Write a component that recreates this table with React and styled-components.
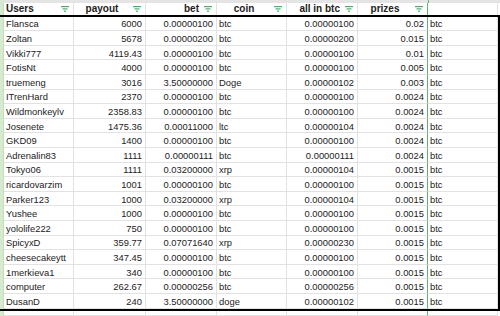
import styled, { createGlobalStyle } from "styled-components";

const GlobalStyle = createGlobalStyle`
  html, body {
    margin: 0;
    padding: 0;
    background: #ffffff;
    overflow: hidden;
  }
  * { box-sizing: border-box; }
`;

const COLS = "4px 70px 72px 71px 70px 71px 70px 70px";

const rows = [
  ["Flansca", "6000", "0.00000100", "btc", "0.00000100", "0.02"],
  ["Zoltan", "5678", "0.00000200", "btc", "0.00000200", "0.015"],
  ["Vikki777", "4119.43", "0.00000100", "btc", "0.00000100", "0.01"],
  ["FotisNt", "4000", "0.00000100", "btc", "0.00000100", "0.005"],
  ["truemeng", "3016", "3.50000000", "Doge", "0.00000102", "0.003"],
  ["ITrenHard", "2370", "0.00000100", "btc", "0.00000100", "0.0024"],
  ["Wildmonkeylv", "2358.83", "0.00000100", "btc", "0.00000100", "0.0024"],
  ["Josenete", "1475.36", "0.00011000", "ltc", "0.00000104", "0.0024"],
  ["GKD09", "1400", "0.00000100", "btc", "0.00000100", "0.0024"],
  ["Adrenalin83", "1111", "0.00000111", "btc", "0.00000111", "0.0024"],
  ["Tokyo06", "1111", "0.03200000", "xrp", "0.00000104", "0.0015"],
  ["ricardovarzim", "1001", "0.00000100", "btc", "0.00000100", "0.0015"],
  ["Parker123", "1000", "0.03200000", "xrp", "0.00000104", "0.0015"],
  ["Yushee", "1000", "0.00000100", "btc", "0.00000100", "0.0015"],
  ["yololife222", "750", "0.00000100", "btc", "0.00000100", "0.0015"],
  ["SpicyxD", "359.77", "0.07071640", "xrp", "0.00000230", "0.0015"],
  ["cheesecakeytt", "347.45", "0.00000100", "btc", "0.00000100", "0.0015"],
  ["1merkieva1", "340", "0.00000100", "btc", "0.00000100", "0.0015"],
  ["computer", "262.67", "0.00000256", "btc", "0.00000256", "0.0015"],
  ["DusanD", "240", "3.50000000", "doge", "0.00000102", "0.0015"],
];

const Sheet = styled.div`
  width: 500px;
  height: 316px;
  background: #ffffff;
  font-family: "Liberation Sans", Arial, sans-serif;
  color: #222222;
  display: flex;
  flex-direction: column;
  overflow: hidden;
`;

const TopBand = styled.div`
  height: 3px;
  background: #e4e4e4;
  display: grid;
  grid-template-columns: 4px 424px 1px 71px;
`;

const BandCell = styled.div`
  background: ${(p) => p.bg || "transparent"};
`;

const HeaderRow = styled.div`
  display: grid;
  grid-template-columns: ${COLS} 2px;
  height: 13px;
`;

const Body = styled.div`
  width: 500px;
  border-top: 2px solid #000000;
  border-bottom: 2px solid #000000;
`;

const Row = styled.div`
  display: grid;
  grid-template-columns: ${COLS} 2px;
  height: ${(p) => p.h || 14.6}px;
`;

const Gutter = styled.div`
  background: #d6ead0;
  border-right: 1px solid #c5dcc0;
`;

const Cell = styled.div`
  display: flex;
  align-items: center;
  justify-content: ${(p) =>
    p.align === "right" ? "flex-end" : p.align === "center" ? "center" : "flex-start"};
  padding: 1px 3px 0 2px;
  font-size: 9.4px;
  white-space: nowrap;
  overflow: hidden;
  border-right: 1px solid ${(p) => (p.green ? "#5fb36a" : "#e2e2e2")};
  border-bottom: 1px solid #e2e2e2;
`;

const HeadCell = styled.div`
  display: flex;
  align-items: center;
  gap: 5px;
  padding: 0 4px 0 2px;
  font-size: 10px;
  font-weight: bold;
  white-space: nowrap;
  border-right: 1px solid ${(p) => (p.green ? "#5fb36a" : "#e2e2e2")};
`;

const HeadLabel = styled.span`
  flex: 1;
  text-align: ${(p) => p.align || "left"};
`;

const RightEdge = styled.div`
  background: #000000;
`;

const Filter = () => (
  <svg width="8" height="6" viewBox="0 0 8 6">
    <rect x="0" y="0" width="8" height="1.2" fill="#4caf6e" />
    <rect x="1.5" y="2.3" width="5" height="1.2" fill="#4caf6e" />
    <rect x="3" y="4.6" width="2" height="1.2" fill="#4caf6e" />
  </svg>
);

const headers = [
  ["Users", "left"],
  ["payout", "center"],
  ["bet", "right"],
  ["coin", "center"],
  ["all in btc", "right"],
  ["prizes", "center"],
];

const aligns = ["left", "right", "right", "left", "right", "right"];

export default function App() {
  return (
    <>
      <GlobalStyle />
      <Sheet>
        <TopBand>
          <BandCell bg="#d6ead0" />
          <BandCell />
          <BandCell bg="#5fb36a" />
          <BandCell />
        </TopBand>
        <HeaderRow>
          <Gutter />
          {headers.map(([label, align], i) => (
            <HeadCell key={label} green={i === 5}>
              <HeadLabel align={align}>{label}</HeadLabel>
              <Filter />
            </HeadCell>
          ))}
          <HeadCell />
          <div />
        </HeaderRow>
        <Body>
          {rows.map((r) => (
            <Row key={r[0]}>
              <Gutter />
              {r.map((v, i) => (
                <Cell key={i} align={aligns[i]} green={i === 5}>
                  {v}
                </Cell>
              ))}
              <Cell>btc</Cell>
              <RightEdge />
            </Row>
          ))}
        </Body>
        <Row h={6}>
          <Gutter />
          {aligns.map((a, i) => (
            <Cell key={i} green={i === 5} />
          ))}
          <Cell />
          <div />
        </Row>
      </Sheet>
    </>
  );
}
